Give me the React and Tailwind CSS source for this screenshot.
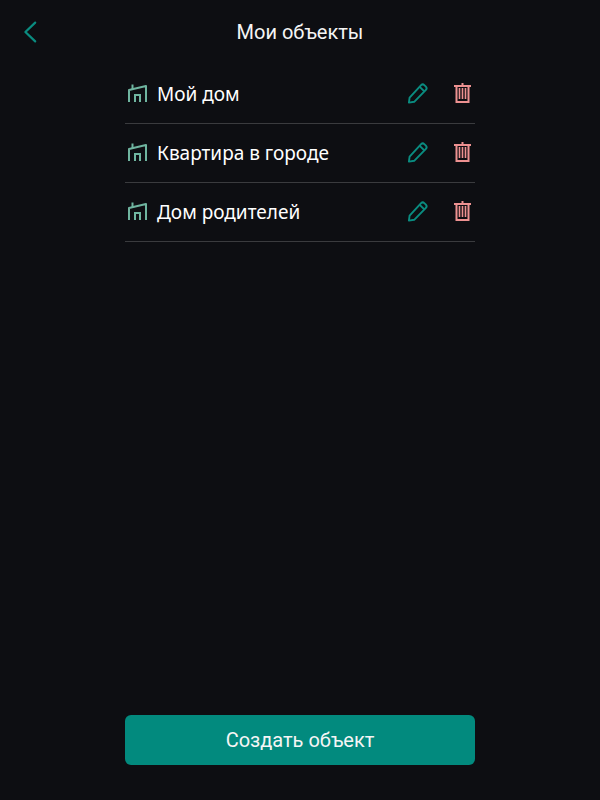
const objects = ["Мой дом", "Квартира в городе", "Дом родителей"];

function HouseIcon() {
  return (
    <svg className="size-6 shrink-0" viewBox="0 0 24 24" fill="none" stroke="#6fb5a0" strokeWidth="2" aria-hidden="true">
      <path d="M4 20V8L21 4V20" strokeLinejoin="round" />
      <path d="M7.5 7V2.5" />
      <path d="M10 20V13H15V20" />
    </svg>
  );
}

function PencilIcon() {
  return (
    <svg className="size-6" viewBox="0 0 24 24" fill="none" stroke="#0a8c80" strokeWidth="1.9" strokeLinejoin="round" aria-hidden="true">
      <path d="M2.9 20.6L3.6 15.7L15.1 3.2Q16.7 1.6 18.3 3.1L19.9 4.6Q21.4 6.2 19.9 7.8L8.2 19.8Z" />
      <path d="M13.7 4.9L18.2 9.3" />
    </svg>
  );
}

function TrashIcon() {
  return (
    <svg className="size-6" viewBox="0 0 24 24" fill="none" stroke="#ed9191" strokeWidth="2" aria-hidden="true">
      <path d="M4 4H21" />
      <path d="M12.5 4V1" />
      <path d="M6.5 4V20H18.5V4" />
      <path d="M9.5 6V17M12.5 6V17M15.5 6V17" strokeWidth="1.6" />
    </svg>
  );
}

export default function App() {
  return (
    <div className="flex min-h-screen flex-col bg-[#0d0e12] font-['Roboto','Liberation_Sans',sans-serif] text-[#f5f5f5]">
      <header className="grid h-16 grid-cols-[60px_1fr_60px] items-center">
        <button type="button" aria-label="Назад" className="flex size-15 items-center justify-center">
          <svg className="size-6" viewBox="0 0 24 24" fill="none" stroke="#0a8c80" strokeWidth="2.2" strokeLinecap="round" strokeLinejoin="round" aria-hidden="true">
            <path d="M17.2 2.6L7.4 12L17.2 21.4" />
          </svg>
        </button>
        <h1 className="text-center text-xl">Мои объекты</h1>
      </header>
      <main className="mx-auto flex w-full max-w-[350px] flex-1 flex-col pt-px">
        <ul>
          {objects.map((name) => (
            <li key={name} className="flex h-[59px] items-center border-b border-[#3a3b3e]">
              <HouseIcon />
              <span className="ml-2 flex-1 font-['Noto_Sans','Open_Sans',sans-serif] text-[19px] text-white">{name}</span>
              <button type="button" aria-label={`Изменить: ${name}`}>
                <PencilIcon />
              </button>
              <button type="button" aria-label={`Удалить: ${name}`} className="mr-px ml-5">
                <TrashIcon />
              </button>
            </li>
          ))}
        </ul>
        <button type="button" className="mt-auto mb-[35px] h-[50px] w-full rounded-md bg-[#028a7e] text-xl">
          Создать объект
        </button>
      </main>
    </div>
  );
}
